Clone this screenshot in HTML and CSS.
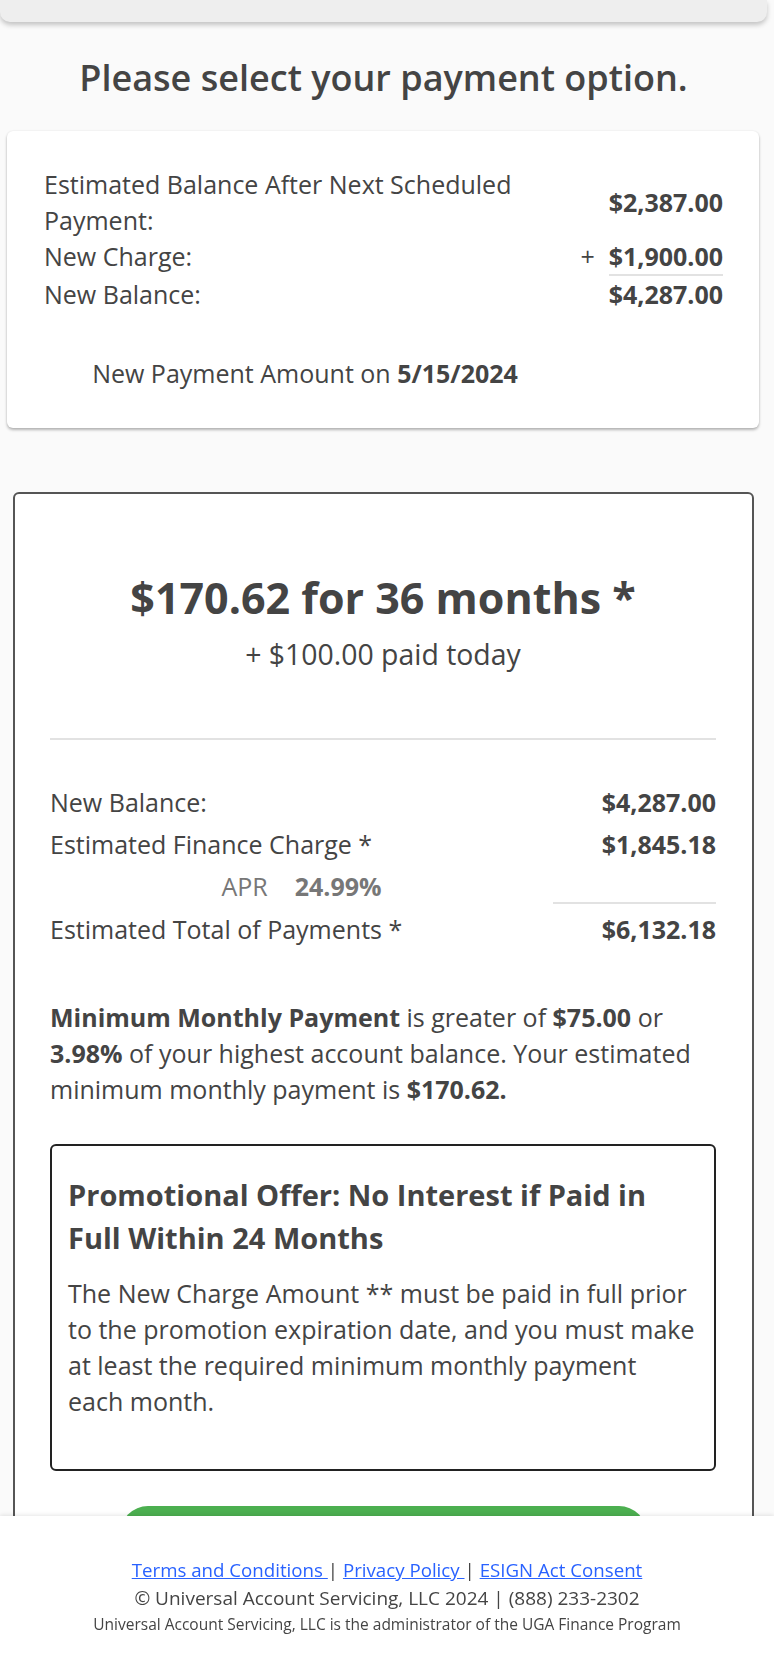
FILE: index.html
```html
<!DOCTYPE html>
<html lang="en">
<head>
<meta charset="utf-8">
<title>Payment Option</title>
<link rel="stylesheet" href="styles.css">
</head>
<body>
<div class="page">
  <div class="topbar"></div>
  <h1 class="title">Please select your payment option.</h1>

  <section class="summary">
    <div class="summary-grid">
      <div class="lbl">Estimated Balance After Next Scheduled Payment:</div>
      <div class="val val-mid">$2,387.00</div>
      <div class="lbl">New Charge:</div>
      <div class="val"><span class="plus">+</span><span class="underlined">$1,900.00</span></div>
      <div class="lbl">New Balance:</div>
      <div class="val">$4,287.00</div>
      <div class="pay-line">New Payment Amount on <b>5/15/2024</b></div>
    </div>
  </section>

  <section class="option">
    <h2 class="price">$170.62 for 36 months *</h2>
    <div class="sub">+ $100.00 paid today</div>
    <hr class="divider">
    <div class="rows">
      <div class="lbl">New Balance:</div>
      <div class="val">$4,287.00</div>
      <div class="lbl">Estimated Finance Charge *</div>
      <div class="val">$1,845.18</div>
      <div class="apr"><span class="apr-lbl">APR</span><b>24.99%</b></div>
      <div class="val apr-val"></div>
      <div class="rule"></div>
      <div class="lbl">Estimated Total of Payments *</div>
      <div class="val">$6,132.18</div>
    </div>
    <p class="minimum"><b>Minimum Monthly Payment</b> is greater of <b>$75.00</b> or <b>3.98%</b> of your highest account balance. Your estimated minimum monthly payment is <b>$170.62.</b></p>
    <div class="promo">
      <h3>Promotional Offer: No Interest if Paid in Full Within 24 Months</h3>
      <p>The New Charge Amount ** must be paid in full prior to the promotion expiration date, and you must make at least the required minimum monthly payment each month.</p>
    </div>
    <button class="select-btn" type="button">Select</button>
  </section>
</div>

<footer class="footer">
  <div class="links"><a href="#">Terms and Conditions </a>| <a href="#">Privacy Policy </a>| <a href="#">ESIGN Act Consent</a></div>
  <div class="copy">© Universal Account Servicing, LLC 2024 | (888) 233-2302</div>
  <div class="admin">Universal Account Servicing, LLC is the administrator of the UGA Finance Program</div>
</footer>
</body>
</html>
```

FILE: styles.css
```css
* { box-sizing: border-box; }

html, body {
  margin: 0;
  padding: 0;
}

body {
  background: #fafafa;
  font-family: "Open Sans", "Noto Sans", sans-serif;
  color: #444;
}

.page {
  width: 767px;
}

.topbar {
  height: 22px;
  background: #eeeeee;
  border-radius: 0 0 10px 10px;
  box-shadow: 0 3px 5px rgba(0, 0, 0, 0.22);
}

.title {
  margin: 34px 0 0;
  text-align: center;
  font-size: 36px;
  line-height: 44px;
  font-weight: 600;
}

/* Summary card */
.summary {
  margin: 31px 8px 0 7px;
  background: #fff;
  border-radius: 6px;
  box-shadow: 0 2px 3px rgba(0, 0, 0, 0.28), 0 0 2px rgba(0, 0, 0, 0.08);
  padding: 35px 36px 37px 37px;
}

.summary-grid {
  display: grid;
  grid-template-columns: 522px 1fr;
}

.lbl {
  font-size: 25px;
  line-height: 36px;
  align-self: start;
}

.val {
  font-size: 25px;
  line-height: 36px;
  font-weight: 700;
  text-align: right;
  align-self: start;
}

.val-mid { align-self: center; }

.plus {
  font-weight: 400;
  margin-right: 14px;
}

.underlined {
  display: inline-block;
  border-bottom: 2px solid #e2e2e2;
}

.pay-line {
  grid-column: 1;
  margin-top: 43px;
  text-align: center;
  font-size: 25px;
  line-height: 36px;
}

.pay-line b { font-weight: 700; }

/* Option card */
.option {
  margin: 64px 13px 0 13px;
  background: #fff;
  border: 2px solid #555;
  border-radius: 6px;
  padding: 78px 36px 30px 35px;
}

.price {
  margin: 0;
  text-align: center;
  font-size: 43px;
  line-height: 52px;
  font-weight: 700;
}

.sub {
  margin-top: 12px;
  text-align: center;
  font-size: 28.4px;
  line-height: 36px;
}

.divider {
  margin: 66px 0 0;
  border: 0;
  border-top: 2px solid #e2e2e2;
  height: 0;
}

.rows {
  margin-top: 41px;
  display: grid;
  grid-template-columns: 1fr 163px;
}

.rows .lbl,
.rows .val {
  padding: 3px 0;
}

.apr {
  padding: 3px 0 0;
  font-size: 25px;
  line-height: 36px;
  color: #777;
  text-align: center;
}

.rows .apr-val { padding: 3px 0 0; }

.apr-lbl { margin-right: 27px; }

.apr b { font-weight: 700; }

.rule {
  grid-column: 2;
  height: 2px;
  margin-top: -2px;
  margin-bottom: 4px;
  background: #e2e2e2;
}

.minimum {
  margin: 49px 0 0;
  font-size: 25px;
  line-height: 36px;
}

.minimum b { font-weight: 700; }

.promo {
  margin-top: 37px;
  border: 2px solid #222;
  border-radius: 6px;
  padding: 27px 16px 50px 16px;
}

.promo h3 {
  margin: 0;
  font-size: 29px;
  line-height: 43px;
  font-weight: 700;
}

.promo p {
  margin: 16px 0 0;
  font-size: 25px;
  line-height: 36px;
}

.select-btn {
  display: block;
  margin: 35px auto 0;
  width: 527px;
  height: 56px;
  border: 0;
  border-radius: 28px;
  background: #4caf50;
  color: #fff;
  font-family: inherit;
  font-size: 24px;
  font-weight: 700;
}

/* Footer */
.footer {
  position: fixed;
  left: 0;
  right: 0;
  bottom: 0;
  height: 158px;
  background: #fff;
  box-shadow: 0 -1px 4px rgba(0, 0, 0, 0.1);
  padding-top: 40px;
  text-align: center;
}

.links {
  font-size: 18.7px;
  line-height: 28px;
}

.copy {
  font-size: 19px;
  line-height: 28px;
}

.links a {
  color: #2962ff;
  text-decoration: underline;
}

.admin {
  font-size: 15.5px;
  line-height: 24px;
}
```
